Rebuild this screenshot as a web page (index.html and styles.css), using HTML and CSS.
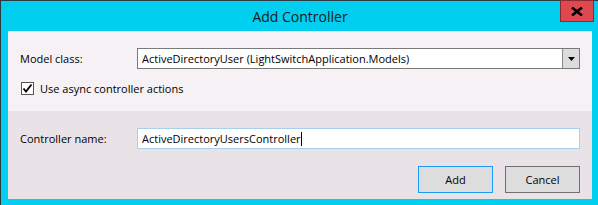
FILE: index.html
```html
<!DOCTYPE html>
<html>
<head>
<meta charset="utf-8">
<link rel="stylesheet" href="styles.css">
</head>
<body>
<div class="window">
  <div class="titlebar">
    <div class="title">Add Controller</div>
    <div class="close"><svg width="12" height="9" viewBox="0 0 12 9"><path d="M1 0.5 L11 8.5 M11 0.5 L1 8.5" stroke="#000" stroke-width="2.6"/></svg></div>
  </div>
  <div class="client">
    <div class="panel top">
      <div class="row">
        <div class="label">Model class:</div>
        <div class="select">
          <div class="select-text">ActiveDirectoryUser (LightSwitchApplication.Models)</div>
          <div class="drop"><svg width="7" height="4" viewBox="0 0 7 4"><path d="M0 0 H7 L3.5 4 Z" fill="#000"/></svg></div>
        </div>
      </div>
      <div class="check-row">
        <div class="checkbox"><svg width="11" height="11" viewBox="0 0 11 11"><path d="M1.5 5.5 L4 8.5 L9.5 1.5" stroke="#000" stroke-width="1.8" fill="none"/></svg></div>
        <div class="check-label">Use async controller actions</div>
      </div>
    </div>
    <div class="panel bottom">
      <div class="row">
        <div class="label">Controller name:</div>
        <div class="input"><span>ActiveDirectoryUsersController</span><span class="caret"></span></div>
      </div>
      <div class="buttons">
        <div class="btn primary">Add</div>
        <div class="btn">Cancel</div>
      </div>
    </div>
  </div>
</div>
</body>
</html>
```

FILE: styles.css
```css
html, body {
  margin: 0;
  padding: 0;
}
body {
  width: 598px;
  height: 205px;
  overflow: hidden;
  font-family: "Open Sans", "Noto Sans", sans-serif;
  font-size: 11px;
  color: #000;
}
.window {
  position: relative;
  width: 598px;
  height: 205px;
  box-sizing: border-box;
  background: #00cff0;
  border-top: 1px solid #2a3a40;
  border-left: 1px solid #2a3a40;
  padding: 0 6px 6px 7px;
  display: flex;
  flex-direction: column;
}
.titlebar {
  height: 30px;
  display: flex;
  align-items: center;
  justify-content: center;
}
.title {
  font-size: 14px;
  color: #1a1a1a;
  margin-top: 1px;
}
.close {
  position: absolute;
  top: -1px;
  right: 4px;
  width: 32px;
  height: 20px;
  background: #e04850;
  border: 1px solid #8a2a30;
  display: flex;
  align-items: center;
  justify-content: center;
}
.client {
  flex: 1;
  display: flex;
  flex-direction: column;
}
.panel {
  padding: 0 12px;
}
.top {
  height: 80px;
  background: #f6f1f4;
  padding-top: 17px;
  box-sizing: border-box;
}
.bottom {
  flex: 1;
  background: #e9e3e7;
  padding-top: 17px;
  box-sizing: border-box;
}
.row {
  display: flex;
  align-items: center;
}
.label {
  width: 117px;
}
.select {
  flex: 1;
  height: 21px;
  box-sizing: border-box;
  border: 1px solid #7a7a7a;
  background: #fff;
  display: flex;
}
.select-text {
  flex: 1;
  padding-left: 4px;
  line-height: 19px;
}
.drop {
  width: 16px;
  background: #dcdcdc;
  border-left: 1px solid #8a8a8a;
  display: flex;
  align-items: center;
  justify-content: center;
}
.check-row {
  display: flex;
  align-items: center;
  margin-top: 12px;
  padding-left: 1px;
}
.checkbox {
  width: 13px;
  height: 13px;
  box-sizing: border-box;
  border: 1px solid #555;
  background: #fff;
  display: flex;
  align-items: center;
  justify-content: center;
}
.check-label {
  margin-left: 6px;
}
.input {
  flex: 1;
  height: 21px;
  box-sizing: border-box;
  border: 1px solid #a6d0ee;
  background: #fff;
  padding-left: 4px;
  line-height: 19px;
  display: flex;
  align-items: center;
}
.caret {
  display: inline-block;
  width: 1px;
  height: 14px;
  background: #000;
}
.buttons {
  display: flex;
  justify-content: flex-end;
  gap: 12px;
  margin-top: 17px;
}
.btn {
  width: 75px;
  height: 27px;
  box-sizing: border-box;
  border: 1px solid #707070;
  background: #dddddd;
  display: flex;
  align-items: center;
  justify-content: center;
}
.btn.primary {
  border-color: #1a9cf5;
}
```
